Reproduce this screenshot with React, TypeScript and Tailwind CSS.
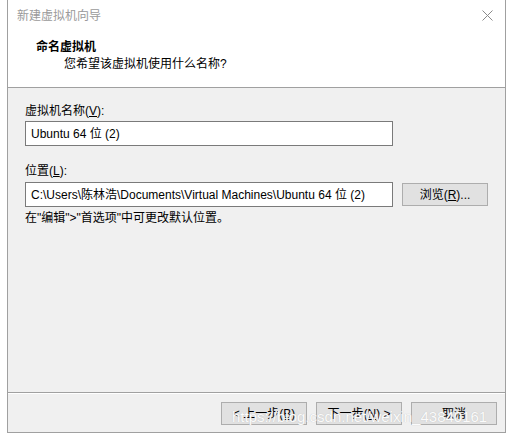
import React from 'react'

const font = { fontFamily: '"Liberation Sans", "Noto Sans CJK SC", sans-serif' }

function Btn({ children, className = '' }: { children: React.ReactNode; className?: string }) {
    return (
        <div className={`w-[86px] h-[23px] flex items-center justify-center bg-[#e1e1e1] border border-[#adadad] text-[12px] text-black leading-none ${className}`}>
            {children}
        </div>
    )
}

export default function App() {
    return (
        <div className="w-[513px] h-[440px] bg-white relative overflow-hidden" style={font}>
            <div className="ml-[7px] w-[499px] h-[433px] border-l border-r border-b border-[#a0a0a0] flex flex-col">
                {/* header */}
                <div className="h-[88px] bg-white border-b border-[#a0a0a0] shrink-0">
                    <div className="flex items-center justify-between pt-[8px] pl-[9px] pr-[12px] h-[24px]">
                        <span className="text-[12px] leading-[16px] text-[#9a9a9a]">新建虚拟机向导</span>
                        <svg width="11" height="11" viewBox="0 0 11 11" className="mt-[-2px]">
                            <path d="M0.5 0.5 L10.5 10.5 M10.5 0.5 L0.5 10.5" stroke="#8a8a8a" strokeWidth="1" fill="none" />
                        </svg>
                    </div>
                    <div className="pl-[28px] mt-[15px] text-[12px] leading-[16px] font-bold text-black">命名虚拟机</div>
                    <div className="pl-[56px] mt-[1px] text-[12px] leading-[16px] text-black">您希望该虚拟机使用什么名称?</div>
                </div>

                {/* body */}
                <div className="flex-1 bg-[#f0f0f0] pl-[17px] pt-[15px]">
                    <div className="text-[12px] leading-[16px] text-black">
                        虚拟机名称(<span className="underline">V</span>):
                    </div>
                    <div className="mt-[2px] w-[368px] h-[25px] bg-white border border-[#7a7a7a] flex items-center px-[5px] text-[12px] text-black">
                        Ubuntu 64 位 (2)
                    </div>

                    <div className="mt-[17px] text-[12px] leading-[16px] text-black">
                        位置(<span className="underline">L</span>):
                    </div>
                    <div className="mt-[3px] flex items-center gap-[9px]">
                        <div className="w-[368px] h-[25px] bg-white border border-[#7a7a7a] flex items-center px-[5px] text-[12px] text-black whitespace-nowrap overflow-hidden">
                            C:\Users\陈林浩\Documents\Virtual Machines\Ubuntu 64 位 (2)
                        </div>
                        <Btn>
                            浏览(<span className="underline">R</span>)...
                        </Btn>
                    </div>

                    <div className="mt-[3px] text-[12px] leading-[16px] text-black">
                        在"编辑"&gt;"首选项"中可更改默认位置。
                    </div>
                </div>

                {/* footer */}
                <div className="h-[40px] shrink-0 bg-[#f0f0f0] border-t border-[#a0a0a0] shadow-[inset_0_1px_0_#ffffff] flex items-start justify-end gap-[9px] pt-[9px] pr-[8px]">
                    <Btn>&lt; 上一步(<span className="underline">B</span>)</Btn>
                    <Btn>下一步(<span className="underline">N</span>) &gt;</Btn>
                    <Btn>取消</Btn>
                </div>
            </div>

            <div className="absolute left-[232px] top-[409px] text-[15px] leading-[16px] text-[#fbfbfb] whitespace-nowrap [text-shadow:0_0_1px_#b8b8b8] pointer-events-none">
                https://blog.csdn.net/weixin_43840161
            </div>
        </div>
    )
}
